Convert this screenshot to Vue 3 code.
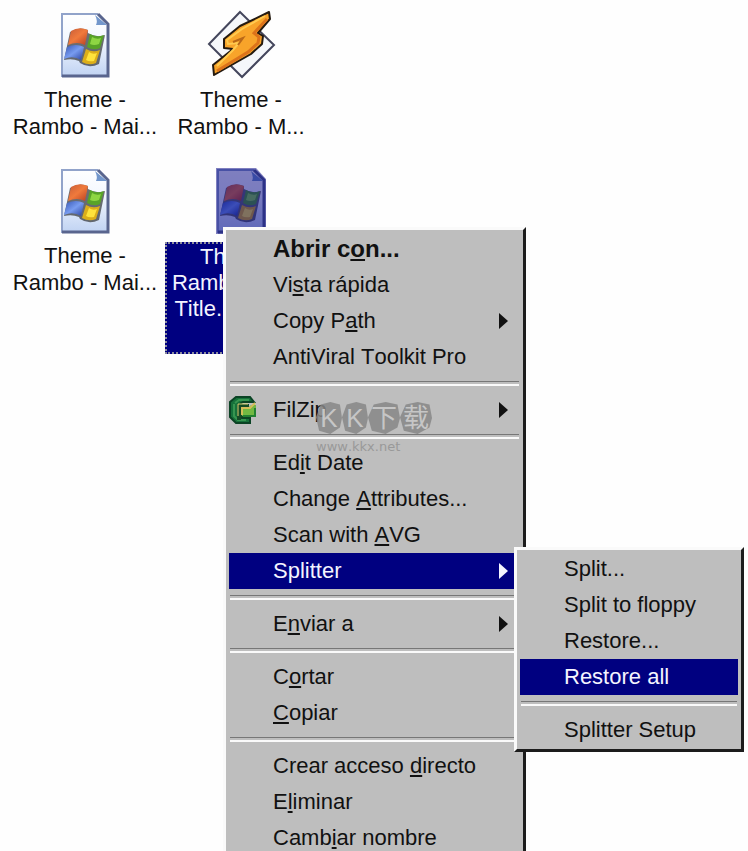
<template>
    <main class="desktop">
        <div class="icons">
            <button
                v-for="(file, index) in files"
                :key="index"
                class="file"
                :class="{ selected: file.selected }"
                type="button"
            >
                <svg v-if="file.type === 'winamp'" class="file-icon" viewBox="0 0 70 70" aria-hidden="true">
                    <path d="M34 2 68 35 36 67 3 34Z" fill="#f5f7fa" stroke="#44465c" stroke-width="2"/>
                    <path d="M63 2 64 9 52 23 57 26 56 34 45 44 8 65 7 55 27 39 18 38 18 29 34 16Z" fill="#f8a42a" stroke="#241a10" stroke-width="2" stroke-linejoin="round"/>
                    <path d="M59 6 36 19 21 30 22 34 33 33 27 40 11 56" fill="none" stroke="#ffcb50" stroke-width="2"/>
                    <path d="M61 9 48 23 53 27 52 33 42 42 11 61" fill="none" stroke="#dc731b" stroke-width="3"/>
                    <path d="M27 32 37 28 32 35" fill="none" stroke="#b96818" stroke-width="2"/>
                </svg>
                <svg v-else class="file-icon" viewBox="0 0 70 70" aria-hidden="true">
                    <defs>
                        <linearGradient :id="'paper' + index" x1="0" y1="0" x2="0" y2="1">
                            <stop offset="0" stop-color="#ffffff"/>
                            <stop offset=".4" stop-color="#f4f8ff"/>
                            <stop offset="1" stop-color="#bfd2f2"/>
                        </linearGradient>
                        <linearGradient :id="'red' + index" x1="0" y1="0" x2="1" y2="1">
                            <stop offset="0" stop-color="#c65b38"/>
                            <stop offset=".5" stop-color="#f07a3c"/>
                            <stop offset="1" stop-color="#b83f22"/>
                        </linearGradient>
                        <linearGradient :id="'blue' + index" x1="0" y1="0" x2="1" y2="1">
                            <stop offset="0" stop-color="#3454b4"/>
                            <stop offset=".5" stop-color="#789cf0"/>
                            <stop offset="1" stop-color="#29409c"/>
                        </linearGradient>
                    </defs>
                    <path d="M11 3H49L59 14V67H11Z" :fill="`url(#paper${index})`"/>
                    <path d="M12 67V4H48" fill="none" stroke="#91a3ca" stroke-width="2"/>
                    <path d="M48 4 58 14V66H12" fill="none" stroke="#59658e" stroke-width="3"/>
                    <path d="M45 5Q48 11 46 15H57Z" fill="#7397cc"/>
                    <path d="M20 22Q29 16 38 20L38 23Q46 28 55 25L49 54Q39 59 30 53L29 51Q22 48 14 50Z" fill="#3c3f42" opacity=".75"/>
                    <path d="M21 21Q29 16 38 20L35 35Q27 31 18 35Z" :fill="`url(#red${index})`"/>
                    <path d="M40 24Q47 28 54 25L50 38Q44 41 37 37Z" fill="#58a328"/>
                    <path d="M42 27Q47 30 51 28L49 34Q44 36 40 34Z" fill="#8ed643"/>
                    <path d="M17 37Q26 33 34 37L31 50Q23 45 14 49Z" :fill="`url(#blue${index})`"/>
                    <path d="M36 39Q43 43 50 40L46 53Q39 56 32 52Z" fill="#dcae1a"/>
                    <path d="M39 42Q43 45 47 43L44 51Q39 52 36 50Z" fill="#ffe33c"/>
                    <path v-if="file.selected" d="M10 2H50L60 13V68H10Z" fill="#000080" opacity=".5"/>
                </svg>
                <span class="file-label">
                    <span v-for="line in file.label" :key="line" class="file-line">{{ line }}</span>
                </span>
            </button>
        </div>

        <nav class="menu context-menu">
            <template v-for="(item, index) in menu" :key="index">
                <hr v-if="item.separator" class="separator">
                <div v-else class="item-wrap">
                    <button
                        class="item"
                        :class="{ active: item.children, strong: item.bold }"
                        type="button"
                    >
                        <svg v-if="item.icon" class="item-icon" viewBox="0 0 28 28" aria-hidden="true">
                            <path d="M7 1H21L25 6H14L9 9V19L13 22H21V27H7L1 21V6Z" fill="#16713a" stroke="#0b4324" stroke-width="2"/>
                            <path d="M6 7 10 4H20M5 8V20L9 24H17" fill="none" stroke="#379550" stroke-width="2"/>
                            <path d="M8 8H20V11H27V21H12V24H8Z" fill="#164b27"/>
                            <path d="M13 11H20L22 9H27V20H13Z" fill="#72b942"/>
                            <path d="M9 20V8H19" fill="none" stroke="#d9d373" stroke-width="1"/>
                            <path d="M13 19V12H21L26 7" fill="none" stroke="#d4bd58" stroke-width="2"/>
                            <path d="M14 20H26V12" fill="none" stroke="#248132" stroke-width="2"/>
                        </svg>
                        <span>{{ item.text[0] }}<u v-if="item.text[1]">{{ item.text[1] }}</u>{{ item.text[2] }}</span>
                        <svg v-if="item.arrow" class="arrow" viewBox="0 0 9 16" aria-hidden="true">
                            <path d="M0 0 9 8 0 16Z" fill="currentColor"/>
                        </svg>
                    </button>

                    <div v-if="item.children" class="menu submenu">
                        <template v-for="(child, childIndex) in item.children" :key="childIndex">
                            <hr v-if="child.separator" class="separator">
                            <button v-else class="item" :class="{ active: child.active }" type="button">
                                {{ child.text }}
                            </button>
                        </template>
                    </div>
                </div>
            </template>

            <div class="watermark">
                <div class="watermark-logo">
                    <span>K</span><span>K</span><span>下</span><span>载</span>
                </div>
                <div class="watermark-url">www.kkx.net</div>
            </div>
        </nav>
    </main>
</template>

<script setup>
    const files = [
        { type: 'windows', label: ['Theme -', 'Rambo - Mai...'] },
        { type: 'winamp', label: ['Theme -', 'Rambo - M...'] },
        { type: 'windows', label: ['Theme -', 'Rambo - Mai...'] },
        { type: 'windows', label: ['Theme -', 'Rambo - Main', 'Title.msstyles'], selected: true },
    ];

    const separator = { separator: true };

    // text is split around the underlined access key
    const menu = [
        { text: ['Abrir c', 'o', 'n...'], bold: true },
        { text: ['Vi', 's', 'ta rápida'] },
        { text: ['Copy P', 'a', 'th'], arrow: true },
        { text: ['AntiViral Toolkit Pro'] },
        separator,
        { text: ['FilZip'], arrow: true, icon: true },
        separator,
        { text: ['Ed', 'i', 't Date'] },
        { text: ['Change ', 'A', 'ttributes...'] },
        { text: ['Scan with ', 'A', 'VG'] },
        {
            text: ['Splitter'],
            arrow: true,
            children: [
                { text: 'Split...' },
                { text: 'Split to floppy' },
                { text: 'Restore...' },
                { text: 'Restore all', active: true },
                separator,
                { text: 'Splitter Setup' },
            ],
        },
        separator,
        { text: ['E', 'n', 'viar a'], arrow: true },
        separator,
        { text: ['C', 'o', 'rtar'] },
        { text: ['', 'C', 'opiar'] },
        separator,
        { text: ['Crear acceso ', 'd', 'irecto'] },
        { text: ['E', 'l', 'iminar'] },
        { text: ['Camb', 'i', 'ar nombre'] },
    ];
</script>

<style>
    body {
        margin: 0;
        background-color: #fefefe;
    }
</style>

<style scoped>
    .desktop {
        position: relative;
        height: 100vh;
        overflow: hidden;
        font-family: "Liberation Sans", Arial, sans-serif;
        font-size: 22px;
        font-kerning: none;
        color: #111;
    }

    .icons {
        display: grid;
        grid-template-columns: repeat(auto-fill, 156px);
        grid-auto-rows: 156px;
        max-width: 320px;
        padding: 10px 7px;
    }

    .file {
        display: flex;
        flex-direction: column;
        align-items: center;
        gap: 6px;
        padding: 0;
        border: none;
        background: none;
        font: inherit;
        font-kerning: none;
        color: inherit;
    }

    .file-icon {
        flex: none;
        width: 70px;
        height: 70px;
    }

    .file-label {
        box-sizing: border-box;
        width: 152px;
        line-height: 27px;
    }

    .file-line {
        display: block;
        white-space: nowrap;
    }

    .selected .file-label {
        flex: none;
        height: 112px;
        border: 2px dotted #8c8c9c;
        background-color: #000080;
        color: #f4f4ff;
        line-height: 26px;
    }

    .menu {
        box-sizing: border-box;
        border: 3px solid;
        border-color: #fafafa #1c1c1c #1c1c1c #fafafa;
        background-color: #bebebe;
    }

    .context-menu {
        position: absolute;
        top: 227px;
        left: 223px;
        width: 303px;
        padding: 1px 3px;
    }

    .submenu {
        position: absolute;
        top: -6px;
        left: 285px;
        z-index: 1;
        width: 230px;
        padding: 1px 3px;
    }

    .item-wrap {
        position: relative;
    }

    .item {
        position: relative;
        display: flex;
        align-items: center;
        justify-content: space-between;
        width: 100%;
        height: 36px;
        padding: 0 12px 0 44px;
        border: none;
        background: none;
        font: inherit;
        font-kerning: none;
        color: #111;
        white-space: nowrap;
    }

    .item u {
        text-decoration-thickness: 2px;
        text-underline-offset: 2px;
        text-decoration-skip-ink: none;
    }

    .strong {
        font-size: 24px;
        font-weight: bold;
    }

    .active {
        background-color: #000080;
        color: #f4f4ff;
    }

    .item-icon {
        position: absolute;
        top: 4px;
        left: 0;
        width: 28px;
        height: 28px;
    }

    .arrow {
        width: 9px;
        height: 16px;
    }

    .separator {
        height: 2px;
        margin: 6px 1px;
        border: none;
        border-top: 1px solid #777;
        border-bottom: 2px solid #fafafa;
    }

    .watermark {
        position: absolute;
        top: 172px;
        left: 90px;
        z-index: 0;
        color: #c6c6c6;
        pointer-events: none;
    }

    .watermark-logo {
        display: flex;
        font-family: "Liberation Sans", "Noto Sans CJK SC", sans-serif;
        font-size: 26px;
        line-height: 32px;
        text-align: center;
    }

    .watermark-logo span {
        width: 26px;
        background-color: rgba(135, 135, 135, 0.85);
        clip-path: polygon(18% 8%, 55% 0, 92% 8%, 100% 50%, 92% 80%, 55% 100%, 12% 90%, 0 48%);
    }

    .watermark-logo span:nth-child(n + 3) {
        width: 32px;
    }

    .watermark-url {
        font-family: "DejaVu Sans", sans-serif;
        font-size: 13px;
        line-height: 26px;
        color: #999;
    }
</style>
